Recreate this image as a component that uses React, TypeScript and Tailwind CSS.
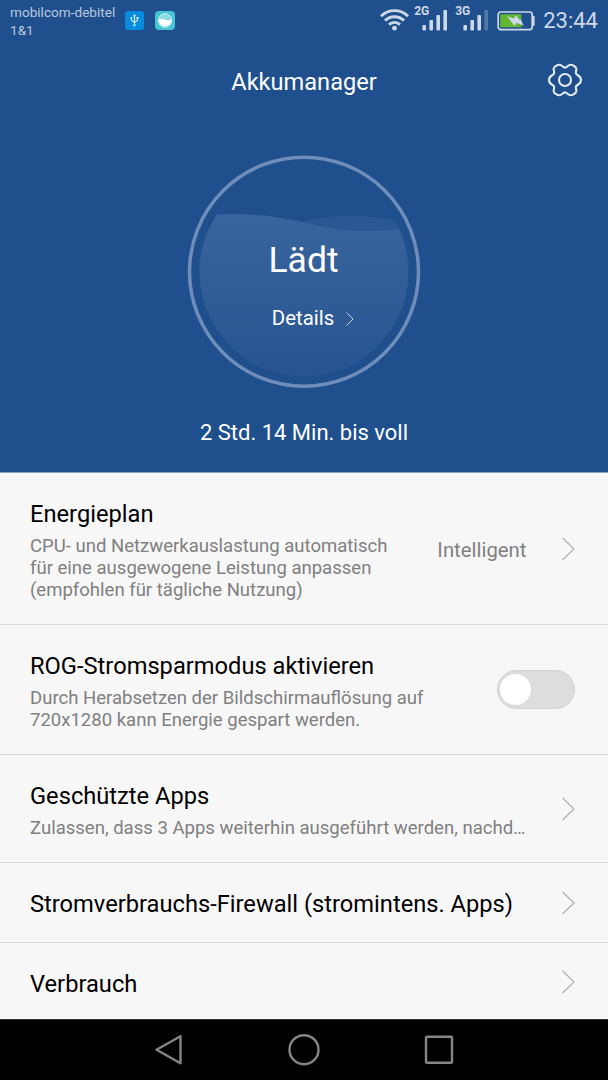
import type { ReactNode } from "react";

function WifiIcon() {
  return (
    <svg className="block h-[22px] w-[29px]" viewBox="0 0 29 22" fill="none" stroke="#ced9e7" strokeWidth="2.900">
      <path d="M1 7.200C8.500-.2 20.500-.2 28 7.200" />
      <path d="M5 11.600c5.300-5.100 13.700-5.100 19 0" />
      <path d="M9 15.600c3-3 8-3 11 0" />
      <circle cx="14.500" cy="19.200" r="2.400" fill="#ced9e7" stroke="none" />
    </svg>
  );
}

function Signal({ label, level }: { label: string; level: number }) {
  const heights = [5.5, 10.5, 15.5, 20.5];
  return (
    <div className="relative h-[21px] w-[25px]">
      <span className="absolute -top-[6px] -left-[8px] text-[12px] leading-[14px] font-bold text-[#ced9e7]">
        {label}
      </span>
      <svg className="block h-[21px] w-[25px]" viewBox="0 0 25 21">
        {heights.map((h, i) => (
          <rect key={h} x={i * 7 + 0.4} y={20.5 - h} width="3.600" height={h} rx="1" fill={i < level ? "#ced9e7" : "#5478aa"} />
        ))}
      </svg>
    </div>
  );
}

function Battery() {
  return (
    <svg className="block h-[20px] w-[38px]" viewBox="0 0 38 20">
      <rect x="1.200" y="1" width="34" height="17.600" rx="2.500" fill="none" stroke="#ced9e7" strokeWidth="1.700" />
      <path d="M36 5.300h1.200v9H36z" fill="#ced9e7" stroke="#ced9e7" strokeWidth=".8" />
      <path d="M3.300 3.300h21v13h-21z" fill="#62b833" />
      <path d="M10 5l6.700 2.600L19 4.300l3.300 4.500 1.200-.6 3.300 6.500-7.200-2.900-2.100 3.200z" fill="#ced9e7" />
    </svg>
  );
}

function StatusBar() {
  return (
    <div className="flex h-[41px] text-[#b9c9de]">
      <div className="w-[125px] pt-[3px] pl-[10px] text-[13.600px] leading-[18px] whitespace-nowrap">
        <div>mobilcom-debitel</div>
        <div>1&amp;1</div>
      </div>
      <div className="flex gap-[11px] pt-[11px]">
        <svg className="block size-[19px]" viewBox="0 0 19 19" fill="none">
          <rect width="19" height="19" rx="3" fill="#078bdf" />
          <path d="M9.500 4v10M6.500 7v2.500l3 2 3-2V7" stroke="#d6e9f8" strokeWidth="1.100" />
          <path d="M9.500 3l1.500 2.200H8zM11.500 6h2v2h-2z" fill="#d6e9f8" />
          <circle cx="6.500" cy="7" r="1.100" fill="#d6e9f8" />
          <circle cx="9.500" cy="14.200" r="1.400" fill="#7fdcea" />
        </svg>
        <svg className="block h-[19px] w-[20px]" viewBox="0 0 20 19">
          <rect width="20" height="19" rx="4" fill="#46c5d3" />
          <circle cx="10" cy="9.500" r="6.700" fill="#8bdce1" stroke="#d9f3f5" strokeWidth="1" />
          <path d="M3.700 8.700c2.300-1 3.800-.8 6.300 0s4.400.7 6.300 0A6.300 6.300 0 1 1 3.700 8.700z" fill="#fff" />
        </svg>
      </div>
      <div className="flex flex-1 justify-end pr-[10px]">
        <div className="mt-[9px] mr-[13px]"><WifiIcon /></div>
        <div className="mt-[10px] mr-[16px]"><Signal label="2G" level={4} /></div>
        <div className="mt-[10px] mr-[9px]"><Signal label="3G" level={3} /></div>
        <div className="mt-[11px] mr-[8px]"><Battery /></div>
        <span className="pt-[7px] text-[22px] leading-[28px] text-[#ced9e7]">23:44</span>
      </div>
    </div>
  );
}

function GearIcon() {
  return (
    <svg className="block h-[34px] w-[36px]" viewBox="0 0 36 34" fill="none" stroke="#e4eaf3" strokeWidth="2.100" strokeLinejoin="round">
      <path d="M18 4.600C20 4.600 21.200 1.700 23.500 1.700C25.500 1.700 28.800 3.600 29.300 5.500C29.800 7.500 28.200 8.600 29 10.600C29.800 12.600 34 12.400 34 17C34 21.600 29.800 21.400 29 23.400C28.200 25.400 29.800 26.500 29.300 28.500C28.800 30.400 25.500 32.300 23.500 32.300C21.200 32.300 20 29.400 18 29.400C16 29.400 14.800 32.300 12.500 32.300C10.500 32.300 7.200 30.400 6.700 28.500C6.200 26.500 7.800 25.400 7 23.400C6.200 21.400 2 21.600 2 17C2 12.400 6.200 12.600 7 10.600C7.800 8.600 6.200 7.500 6.700 5.500C7.200 3.600 10.500 1.700 12.500 1.700C14.800 1.700 16 4.600 18 4.600Z" />
      <circle cx="18" cy="17" r="6" />
    </svg>
  );
}

function Gauge() {
  return (
    <div className="relative mt-[33px] size-[234px]">
      <svg className="absolute inset-0 size-full" viewBox="0 0 234 234">
        <defs>
          <linearGradient id="water" x1="0" y1="0" x2="0" y2="1">
            <stop offset="0" stopColor="#d8e4ff" stopOpacity=".14" />
            <stop offset="1" stopColor="#d8e4ff" stopOpacity=".035" />
          </linearGradient>
          <clipPath id="bowl"><circle cx="117" cy="117" r="104.500" /></clipPath>
        </defs>
        <g clipPath="url(#bowl)">
          <path d="M115 67C140 59 180 58 224 68V73C175 79 150 76 115 67Z" fill="#2a5894" />
          <path d="M10 61C50 57 80 59 115 67C150 76 175 79 224 73V234H10Z" fill="url(#water)" />
        </g>
        <circle cx="117" cy="116.700" r="114.500" fill="none" stroke="#6f8dba" strokeWidth="3.500" />
      </svg>
      <div className="relative flex flex-col items-center text-white">
        <span className="mt-[84px] -ml-px text-[35.500px] leading-[42px]">Lädt</span>
        <div className="mt-[25px] ml-[18px] flex items-center gap-[12px]">
          <span className="text-[20.400px] leading-[24px]">Details</span>
          <svg className="mt-px block h-[14px] w-[8px]" viewBox="0 0 8 14" fill="none" stroke="#c5d1e2">
            <path d="M.5.500L7 7 .5 13.500" />
          </svg>
        </div>
      </div>
    </div>
  );
}

function Header() {
  return (
    <header className="h-[473px] border-b border-[#8da5c5] bg-[#1f4f8d]">
      <StatusBar />
      <div className="grid h-[81px] grid-cols-[1fr_auto_1fr] items-center">
        <span />
        <h1 className="text-[23.600px] leading-[28px] text-white">Akkumanager</h1>
        <div className="flex justify-end pr-[25.500px] pb-[3px]"><GearIcon /></div>
      </div>
      <div className="flex flex-col items-center">
        <Gauge />
        <p className="mt-[30px] text-[22px] leading-[28px] text-white">2 Std. 14 Min. bis voll</p>
      </div>
    </header>
  );
}

function Chevron() {
  return (
    <svg className="block h-[24px] w-[14px]" viewBox="0 0 14 24" fill="none" stroke="#b0b0b0" strokeWidth="1.200">
      <path d="M1.500 .8l11.500 11.200L1.500 23" />
    </svg>
  );
}

function Row({ title, lines = [], size, children }: { title: string; lines?: string[]; size: string; children: ReactNode }) {
  return (
    <section className={`${size} flex justify-between border-[#d9dadb] pr-[33.500px] pl-[30px]`}>
      <div className="pt-[27px] whitespace-nowrap">
        <h2 className="text-[23.680px] leading-[28px] text-black">{title}</h2>
        <div className="mt-[8px] text-[18.540px] leading-[21.800px] text-[#808080]">
          {lines.map((line) => <p key={line}>{line}</p>)}
        </div>
      </div>
      <div className="flex items-center">{children}</div>
    </section>
  );
}

export default function App() {
  return (
    <div className="flex h-[1080px] w-[608px] flex-col overflow-hidden bg-[#f7f7f7] font-['Roboto',sans-serif]">
      <Header />
      <main className="flex-1">
        <Row
          size="h-[152px] border-b"
          title="Energieplan"
          lines={["CPU- und Netzwerkauslastung automatisch", "für eine ausgewogene Leistung anpassen", "(empfohlen für tägliche Nutzung)"]}
        >
          <span className="mt-[2px] mr-[34px] text-[20.350px] leading-[24px] text-[#808080]">Intelligent</span>
          <Chevron />
        </Row>
        <Row
          size="h-[130px] border-b"
          title="ROG-Stromsparmodus aktivieren"
          lines={["Durch Herabsetzen der Bildschirmauflösung auf", "720x1280 kann Energie gespart werden."]}
        >
          <div className="flex h-[39px] w-[78px] items-center rounded-full border border-[#cfd3d8] bg-[#dcddde] pl-[2px]">
            <span className="size-[31px] rounded-full bg-white" />
          </div>
        </Row>
        <Row size="h-[108px] border-b" title="Geschützte Apps" lines={["Zulassen, dass 3 Apps weiterhin ausgeführt werden, nachd…"]}>
          <Chevron />
        </Row>
        <Row size="h-[80px] border-b" title="Stromverbrauchs-Firewall (stromintens. Apps)">
          <Chevron />
        </Row>
        <Row size="h-[76px]" title="Verbrauch">
          <div className="pt-[2px]"><Chevron /></div>
        </Row>
      </main>
      <nav className="flex h-[61px] items-center justify-center gap-[103px] border-t border-[#333] bg-black">
        <svg className="block size-[32px]" viewBox="0 0 32 32" fill="none" stroke="#858585" strokeWidth="2.400" strokeLinejoin="round">
          <path d="M27.500 2.200v27L3.500 15.700z" />
        </svg>
        <svg className="block size-[32px]" viewBox="0 0 32 32" fill="none" stroke="#858585" strokeWidth="2.400">
          <circle cx="16" cy="15.700" r="14.500" />
        </svg>
        <svg className="block size-[32px]" viewBox="0 0 32 32" fill="none" stroke="#858585" strokeWidth="2.400">
          <rect x="3" y="2.700" width="26" height="26" rx="1" />
        </svg>
      </nav>
    </div>
  );
}
